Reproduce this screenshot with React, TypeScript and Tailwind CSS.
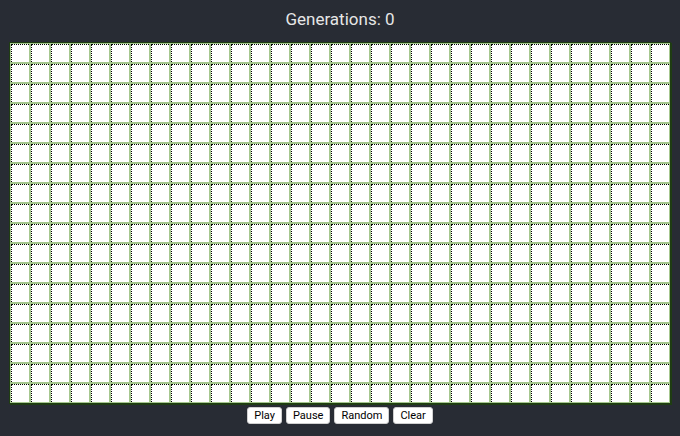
const ROWS = 18
const COLS = 33

export default function App() {
  const cells = Array.from({ length: ROWS * COLS }, (_, i) => i)

  return (
    <div className="min-h-screen bg-[#282c34] font-['Roboto',sans-serif] text-[#e6e6e6]">
      {/* Header */}
      <div className="h-[42px] flex items-center justify-center pb-[2px]">
        <h1 className="text-[17px] font-normal">Generations: 0</h1>
      </div>

      {/* Board */}
      <div className="flex justify-center">
        <div
          className="grid border border-[#1f3d12] bg-[#a6c78f] shadow-[1px_1px_0_#1f3d12]"
          style={{ gridTemplateColumns: `repeat(${COLS}, 20px)` }}
        >
          {cells.map((i) => (
            <div key={i} className="w-5 h-5 border border-[#a6c78f]">
              <div className="w-full h-full bg-white border-t border-l border-dotted border-black" />
            </div>
          ))}
        </div>
      </div>

      {/* Controls */}
      <div className="flex justify-center gap-[4px] pt-[3px]">
        {["Play", "Pause", "Random", "Clear"].map((label) => (
          <button
            key={label}
            className="h-[17px] px-[6px] rounded-[3px] bg-white text-black text-[11px] leading-none border border-[#d0d0d0]"
          >
            {label}
          </button>
        ))}
      </div>
    </div>
  )
}
